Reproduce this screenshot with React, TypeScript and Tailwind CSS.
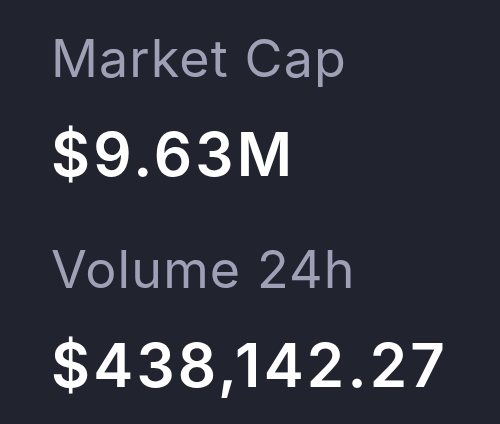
export default function App() {
  return (
    <div
      className="w-[500px] h-[424px] bg-[#21232f] pl-[51px] pt-[29px] flex flex-col"
      style={{ fontFamily: "Inter, 'Noto Sans', sans-serif" }}
    >
      <div className="text-[52px] leading-[60px] tracking-[1.1px] text-[#9ea1b6]">Market Cap</div>
      <div className="mt-[29px] text-[60px] leading-[72px] tracking-[3.2px] font-semibold text-white">$9.63M</div>
      <div className="mt-[50px] text-[52px] leading-[60px] tracking-[1.1px] text-[#9ea1b6]">Volume 24h</div>
      <div className="mt-[29px] text-[60px] leading-[72px] tracking-[3.2px] font-semibold text-white">$438,142.27</div>
    </div>
  );
}
